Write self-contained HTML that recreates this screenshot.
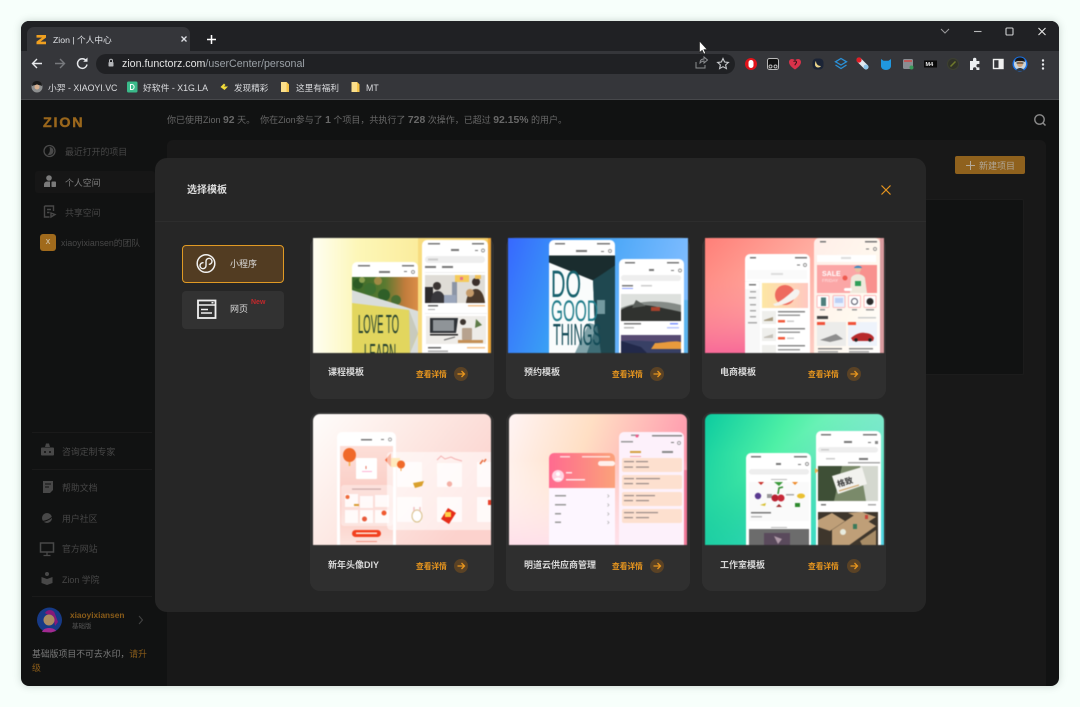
<!DOCTYPE html>
<html lang="zh"><head><meta charset="utf-8"><title>Zion | 个人中心</title>
<style>
*{box-sizing:border-box}
html{background:#f7fffb}
html,body{margin:0;padding:0;width:1080px;height:707px;overflow:hidden;font-family:"Liberation Sans","Noto Sans CJK SC",sans-serif}
body{filter:blur(.25px)}
.a{position:absolute;white-space:nowrap}
svg{position:absolute;display:block}
.side{font-size:8.900px;line-height:14px;color:#474747}
.card{position:absolute;width:184px;background:#2f2f2f;border-radius:10px}
.ct{position:absolute;left:18px;font-size:9px;font-weight:700;color:#d8d8d8;line-height:14px;white-space:nowrap}
.cl{position:absolute;left:106px;font-size:7.700px;font-weight:700;color:#e8961e;line-height:14px;white-space:nowrap}
.th{position:absolute;overflow:hidden;filter:blur(.4px)}
.th svg{position:static}
</style></head><body>

<div class="a" style="left:21px;top:21px;width:1038px;height:665px;border-radius:8px;background:#111212;box-shadow:0 0 8px rgba(60,80,70,.25)"></div>

<div class="a" style="left:21px;top:21px;width:1038px;height:79px;overflow:hidden;border-radius:8px 8px 0 0;background:#202124">
  <div class="a" style="left:0;top:30px;width:1038px;height:49px;background:#35363a"></div>
  <div class="a" style="left:0;top:78px;width:1038px;height:1px;background:#47484b"></div>
  <div class="a" style="left:6px;top:6px;width:163px;height:25px;background:#35363a;border-radius:7px 7px 0 0"></div>
  <div class="a" style="left:32px;top:12px;font-size:8.700px;line-height:14px;color:#dfe1e5">Zion | 个人中心</div>
  <div class="a" style="left:75px;top:33px;width:639px;height:20px;border-radius:10px;background:#202124"></div>
  <div class="a" style="left:101px;top:36px;font-size:10.650px;line-height:14px;color:#e3e3e3">zion.functorz.com<span style="color:#9aa0a6">/userCenter/personal</span></div>
</div>

<svg style="left:0;top:0" width="1080" height="110" viewBox="0 0 1080 110" fill="none">
  <path d="M36.500 35h9.500v2.600l-5.500 4h5.500v2.600H36.500v-2.600l5.500-4h-5.500z" fill="#f0a020"/>
  <path d="M181.500 36.500l5 5M186.500 36.500l-5 5" stroke="#dfe1e5" stroke-width="1.300"/>
  <path d="M207 39.500h9M211.500 35v9" stroke="#fff" stroke-width="1.500"/>
  <path d="M33 63.500h9M37 59l-4.500 4.500L37 68" stroke="#e8eaed" stroke-width="1.400"/>
  <path d="M55 63.500h9M60 59l4.500 4.500L60 68" stroke="#77797d" stroke-width="1.400"/>
  <path d="M86 60.500a4.800 4.800 0 1 0 1 4" stroke="#e8eaed" stroke-width="1.400"/><path d="M87.500 57.500v4.300h-4.300z" fill="#e8eaed"/>
  <rect x="108.500" y="62" width="5" height="4.500" rx=".8" fill="#b5b7ba"/><path d="M109.500 62v-1.200a1.500 1.500 0 0 1 3 0V62" stroke="#b5b7ba"/>
  <path d="M696 62v6h9v-3M700 63c0-3 2-4 4-4v-2l3.500 3-3.500 3v-2c-2 0-3 1-4 2z" stroke="#8c8e91" stroke-width="1"/>
  <path d="M723 58.500l1.600 3.500 3.800.4-2.800 2.500.8 3.700-3.400-1.900-3.400 1.900.8-3.700-2.800-2.500 3.800-.4z" stroke="#c8cacd" stroke-width="1.100"/>
  <circle cx="751" cy="64" r="6" fill="#e0131a"/><rect x="748.500" y="60" width="5" height="8" rx="2.500" fill="#fff"/>
  <rect x="767.500" y="58.500" width="11" height="11" rx="2" fill="#111" stroke="#b9b9b9"/><circle cx="770.500" cy="66.500" r="1.500" stroke="#bbb"/><circle cx="775.500" cy="66.500" r="1.500" stroke="#bbb"/>
  <path d="M795 69.500c-3-2-6-4.500-6-7.500 0-3.500 4.500-4 6-1.500 1.500-2.500 6-2 6 1.500 0 3-3 5.500-6 7.500z" fill="#d8324a"/><path d="M793.500 61.500c1.500-1 3-.5 3 .8s-1.500 1.300-1.500 3" stroke="#2a1214" stroke-width="1"/>
  <rect x="812.500" y="58.500" width="11" height="11" rx="4" fill="#1b2436"/><path d="M816 61c0 3 2 5 5 5-1.500 2.500-6 1.800-6-1.500 0-1.500.3-2.800 1-3.500z" fill="#ead48a"/>
  <path d="M841 58.500l5.500 3.300-5.500 3.200-5.500-3.200zM835.500 65l5.500 3.500 5.500-3.500" stroke="#2a91d8" stroke-width="1.300"/>
  <path d="M859 60l7 7" stroke="#dfe8ef" stroke-width="5" stroke-linecap="round"/><circle cx="859" cy="60" r="2.600" fill="#e01c24"/><circle cx="866" cy="67" r="2.400" fill="#8cc4e8"/>
  <path d="M881 59l2.500 1.800h5L891 59v7c0 2.500-2.500 4-5 4s-5-1.500-5-4z" fill="#2098e0"/>
  <rect x="903" y="59" width="10" height="10" rx="1.500" fill="#8a8d92"/><rect x="904" y="60" width="8" height="2" fill="#c05a5a"/><circle cx="911.500" cy="67.500" r="2" fill="#3a9a5a"/>
  <rect x="924" y="60.500" width="13" height="7" fill="#0a0a0a"/><text x="925.500" y="66" font-size="5.500" font-weight="700" font-family="Liberation Sans" fill="#eee">M4</text>
  <circle cx="953" cy="64" r="5.500" fill="#303228" stroke="#3d4030"/><path d="M950.500 66.500l5-5" stroke="#6f7a2a" stroke-width="1.500"/>
  <path d="M970 61h3v-1.500a1.700 1.700 0 0 1 3.400 0V61h3v3h-1.300a1.700 1.700 0 0 0 0 3.400h1.300v2.600h-3v-1a1.700 1.700 0 0 0-3.400 0v1h-3z" fill="#eceff1"/>
  <rect x="993.500" y="59.500" width="9.500" height="9" stroke="#f0f0f0" stroke-width="1.400"/><rect x="998.500" y="59.500" width="4.500" height="9" fill="#f0f0f0"/>
  <circle cx="1020" cy="64" r="7.500" fill="#1a73e8"/><circle cx="1020" cy="64" r="6" fill="#c9d4da"/><path d="M1015 62c0-3.500 2.500-4.500 5-4.500s5 1 5 4.500c-2-1.300-8-1.300-10 0z" fill="#151515"/><circle cx="1020" cy="64" r="3" fill="#d2a67c"/><path d="M1016.500 63h7" stroke="#222"/><path d="M1016 71c.5-2 2-3 4-3s3.500 1 4 3z" fill="#2e3a48"/>
  <circle cx="1043" cy="60.500" r="1.200" fill="#e8eaed"/><circle cx="1043" cy="64.500" r="1.200" fill="#e8eaed"/><circle cx="1043" cy="68.500" r="1.200" fill="#e8eaed"/>
  <path d="M941 29l4 4 4-4" stroke="#9a9b9d" stroke-width="1"/>
  <path d="M974 31.500h7.500" stroke="#b8b9ba" stroke-width="1.100"/>
  <rect x="1006" y="28" width="7" height="7" rx="1" stroke="#d0d1d2" stroke-width="1.100"/>
  <path d="M1038.500 28l7 7M1045.500 28l-7 7" stroke="#e8e8e8" stroke-width="1.100"/>
  <path d="M699.500 41v11.500l2.700-2.300 1.800 3.800 1.600-.8-1.700-3.600h3.300z" fill="#fff" stroke="#222" stroke-width=".6"/>
  <circle cx="37" cy="87" r="5.500" fill="#8d8f90"/><path d="M32 86c0-4 3-5 5-5s5 1 5 5c-3-1.500-7-1.500-10 0z" fill="#1a1a1a"/><circle cx="37" cy="87" r="2.500" fill="#d8b090"/>
  <rect x="127" y="81.500" width="10.500" height="11" rx="1.500" fill="#3aba8a"/><path d="M130.500 84.500v5h1.500c2.800 0 2.800-5 0-5z" stroke="#f4fff9"/>
  <path d="M220.500 87l3.500-3.500 1.500 1.500-1.500 1.500h4L224.500 90z" fill="#f2dc3a"/>
  <path d="M281 82h5.500l2.500 2.500V92h-8z" fill="#fbdf8a"/><path d="M286.500 82l2.500 2.500V92h-2.500z" fill="#f6c54a"/>
  <path d="M351.500 82h5.500l2.500 2.500V92h-8z" fill="#fbdf8a"/><path d="M357 82l2.500 2.500V92H357z" fill="#f6c54a"/>
</svg>
<div class="a" style="left:48px;top:81px;font-size:8.800px;line-height:14px;color:#dcdde0">小羿 - XIAOYI.VC</div>
<div class="a" style="left:143px;top:81px;font-size:8.800px;line-height:14px;color:#dcdde0">好软件 - X1G.LA</div>
<div class="a" style="left:234px;top:81px;font-size:8.600px;line-height:14px;color:#dcdde0">发现精彩</div>
<div class="a" style="left:296px;top:81px;font-size:8.600px;line-height:14px;color:#dcdde0">这里有福利</div>
<div class="a" style="left:366px;top:81px;font-size:8.800px;line-height:14px;color:#dcdde0">MT</div>

<!-- page behind -->
<div class="a" style="left:167px;top:140px;width:879px;height:546px;background:#181818;border-radius:6px 6px 0 0"></div>
<div class="a" style="left:900px;top:199px;width:124px;height:176px;background:#111212;border:1px solid #1c1c1c;border-radius:2px"></div>
<div class="a" style="left:955px;top:156px;width:70px;height:18px;background:#8f611d;border-radius:2px"></div>
<div class="a" style="left:979px;top:159px;font-size:9px;line-height:15px;color:#b0a696">新建项目</div>
<div class="a" style="left:167px;top:113px;font-size:9px;line-height:15px;color:#686868">你已使用Zion <b style="font-size:10.400px">92</b> 天。&nbsp; 你在Zion参与了 <b style="font-size:10.400px">1</b> 个项目，共执行了 <b style="font-size:10.400px">728</b> 次操作，已超过 <b style="font-size:10.400px">92.15%</b> 的用户。</div>
<div class="a" style="left:43px;top:115px;font-size:13.500px;line-height:16px;font-weight:700;letter-spacing:1.700px;color:#9a671c;-webkit-text-stroke:.4px #9a671c;transform:scaleX(1.06);transform-origin:left">ZION</div>

<div class="a side" style="left:65px;top:145px">最近打开的项目</div>
<div class="a" style="left:35px;top:171px;width:120px;height:22px;background:#161616;border-radius:3px"></div>
<div class="a side" style="left:65px;top:176px;color:#808080">个人空间</div>
<div class="a side" style="left:65px;top:206px">共享空间</div>
<div class="a" style="left:40px;top:234px;width:16px;height:17px;background:#a06a1c;border-radius:3px;color:#cbb898;font:700 7px/17px 'Liberation Sans',sans-serif;text-align:center">X</div>
<div class="a side" style="left:61px;top:236px;font-size:8.800px">xiaoyixiansen的团队</div>
<div class="a" style="left:32px;top:432px;width:120px;height:1px;background:#1a1a1a"></div>
<div class="a" style="left:32px;top:469px;width:120px;height:1px;background:#1a1a1a"></div>
<div class="a" style="left:32px;top:596px;width:120px;height:1px;background:#1a1a1a"></div>
<div class="a side" style="left:62px;top:445px">咨询定制专家</div>
<div class="a side" style="left:62px;top:481px">帮助文档</div>
<div class="a side" style="left:62px;top:512px">用户社区</div>
<div class="a side" style="left:62px;top:542px">官方网站</div>
<div class="a side" style="left:62px;top:573px">Zion 学院</div>
<div class="a" style="left:70px;top:608px;font-size:8.300px;line-height:14px;font-weight:700;color:#8a5c19">xiaoyixiansen</div>
<div class="a" style="left:72px;top:621px;font-size:6.500px;line-height:12px;color:#555">基础版</div>
<div class="a" style="left:32px;top:647px;font-size:8.850px;line-height:15px;color:#7a7a7a">基础版项目不可去水印，<span style="color:#8a5c19">请升</span></div>
<div class="a" style="left:32px;top:661px;font-size:8.850px;line-height:15px;color:#8a5c19">级</div>

<svg style="left:0;top:100px" width="1080" height="600" viewBox="0 100 1080 600" fill="none">
  <circle cx="49.500" cy="151" r="5.500" stroke="#4a4a4a" stroke-width="1.300"/><path d="M49.500 147a4 4 0 0 1 0 8c-1 0-2-.5-2-.5 2-1 3-4 2-7.500z" fill="#4a4a4a"/>
  <circle cx="49" cy="178" r="2.800" fill="#7a7a7a"/><path d="M44 187v-2.500a3 3 0 0 1 3-3h3v5.500z" fill="#7a7a7a"/><rect x="51.500" y="181.500" width="4.500" height="5.500" rx=".8" fill="#7a7a7a"/>
  <path d="M44.500 206h9v5M44.500 206v11h5M47 209.500h4M47 212.500h2.500M51 213l4 1.500-4 2.500z" stroke="#484848" stroke-width="1.400"/>
  <path d="M42 447.500h11a1 1 0 0 1 1 1v6a1 1 0 0 1-1 1H42a1 1 0 0 1-1-1v-6a1 1 0 0 1 1-1zM45 447l1-3.500h3l1 3.500" fill="#484848"/><circle cx="45" cy="452" r="1" fill="#111"/><circle cx="50" cy="452" r="1" fill="#111"/>
  <path d="M43 481h10v9l-3 3h-7z" fill="#484848"/><path d="M45 484h6M45 487h4" stroke="#111"/>
  <circle cx="47" cy="518" r="5" fill="#484848"/><path d="M41 521c3 1 9-1 12-5" stroke="#111" stroke-width="1"/>
  <rect x="40.500" y="543" width="13" height="9" stroke="#484848" stroke-width="1.500"/><path d="M47 552v3M43.500 555.500h7" stroke="#484848" stroke-width="1.300"/>
  <circle cx="47" cy="574" r="2" fill="#484848"/><path d="M41.500 577l5.500 2 5.500-2v6l-5.500 2-5.500-2z" fill="#484848"/>
  <circle cx="49.500" cy="620" r="12.500" fill="#173a86"/><path d="M45 613c2-4 9-4 10 1l3 8-3 4c-1-5-1-9-3-11-2 0-5 0-7-2z" fill="#86197a"/><circle cx="49" cy="620" r="5.500" fill="#ab8c62"/><path d="M42 632c1-3 4-4 7-4s6 1 7 3l-5 1.500z" fill="#a22a90"/>
  <path d="M139 616l3.500 4-3.500 4" stroke="#444" stroke-width="1"/>
  <circle cx="1039.500" cy="119.500" r="4.700" stroke="#8a8a8a" stroke-width="1.400"/><path d="M1043 123l2.500 2.500" stroke="#8a8a8a" stroke-width="1.500"/>
  <path d="M966 165.500h9M970.500 161v9" stroke="#b5aa98" stroke-width="1"/>
</svg>

<!-- modal -->
<div class="a" style="left:155px;top:158px;width:771px;height:454px;background:#262626;border-radius:12px"></div>
<div class="a" style="left:155px;top:221px;width:771px;height:1px;background:#2d2d2d"></div>
<div class="a" style="left:187px;top:183px;font-size:10px;line-height:15px;font-weight:700;color:#dcdcdc">选择模板</div>
<svg style="left:880px;top:184px" width="12" height="12" fill="none"><path d="M1.500 1.500l9 9M10.500 1.500l-9 9" stroke="#e8961e" stroke-width="1.200"/></svg>

<div class="a" style="left:182px;top:245px;width:102px;height:38px;background:#523c22;border:1.500px solid #e09a24;border-radius:4px"></div>
<div class="a" style="left:182px;top:291px;width:102px;height:38px;background:#323232;border-radius:4px"></div>
<div class="a" style="left:230px;top:257px;font-size:9px;line-height:15px;color:#dedede">小程序</div>
<div class="a" style="left:230px;top:302px;font-size:9px;line-height:15px;color:#dedede">网页</div>
<div class="a" style="left:251px;top:297px;font-size:7px;line-height:11px;font-weight:700;color:#c4282c">New</div>
<svg style="left:190px;top:250px" width="34" height="72" viewBox="190 250 34 72" fill="none">
  <circle cx="206" cy="263.500" r="8.800" stroke="#f2f2f2" stroke-width="1.500"/>
  <path d="M203.500 262.700A3 3 0 1 0 206 265.500V261.500A3 3 0 1 1 208.800 264.300" stroke="#f2f2f2" stroke-width="1.400"/>
  <rect x="198" y="300.500" width="17.500" height="17.500" stroke="#f0f0f0" stroke-width="1.800"/>
  <path d="M198 305h17.500" stroke="#f0f0f0" stroke-width="1.600"/><path d="M201 309.500h7M201 313h11" stroke="#f0f0f0" stroke-width="1.400"/><rect x="211.500" y="302" width="2" height="1.500" fill="#f0f0f0"/>
</svg>

<!-- cards -->
<div class="card" style="left:310px;top:237px;height:162px"><div class="ct" style="top:128px">课程模板</div><div class="cl" style="top:131px">查看详情</div></div>
<div class="card" style="left:506px;top:237px;height:162px"><div class="ct" style="top:128px">预约模板</div><div class="cl" style="top:131px">查看详情</div></div>
<div class="card" style="left:702px;top:237px;height:162px"><div class="ct" style="top:128px">电商模板</div><div class="cl" style="top:131px">查看详情</div></div>
<div class="card" style="left:310px;top:412px;height:179px"><div class="ct" style="top:146px">新年头像DIY</div><div class="cl" style="top:148px">查看详情</div></div>
<div class="card" style="left:506px;top:412px;height:179px"><div class="ct" style="top:146px">明道云供应商管理</div><div class="cl" style="top:148px">查看详情</div></div>
<div class="card" style="left:702px;top:412px;height:179px"><div class="ct" style="top:146px">工作室模板</div><div class="cl" style="top:148px">查看详情</div></div>

<svg style="left:300px;top:360px" width="600" height="220" viewBox="300 360 600 220" fill="none">
  <circle cx="461" cy="374" r="7" fill="#5a4225"/><path d="M457.500 374h7M461.500 371l3 3-3 3" stroke="#e8961e" stroke-width="1.300"/>
  <circle cx="657" cy="374" r="7" fill="#5a4225"/><path d="M653.500 374h7M657.500 371l3 3-3 3" stroke="#e8961e" stroke-width="1.300"/>
  <circle cx="854" cy="374" r="7" fill="#5a4225"/><path d="M850.500 374h7M854.500 371l3 3-3 3" stroke="#e8961e" stroke-width="1.300"/>
  <circle cx="461" cy="566" r="7" fill="#5a4225"/><path d="M457.500 566h7M461.500 563l3 3-3 3" stroke="#e8961e" stroke-width="1.300"/>
  <circle cx="657" cy="566" r="7" fill="#5a4225"/><path d="M653.500 566h7M657.500 563l3 3-3 3" stroke="#e8961e" stroke-width="1.300"/>
  <circle cx="854" cy="566" r="7" fill="#5a4225"/><path d="M850.500 566h7M854.500 563l3 3-3 3" stroke="#e8961e" stroke-width="1.300"/>
</svg>

<!-- thumb 1 -->
<div class="th" style="left:313px;top:238px;width:178px;height:115px">
<svg width="178" height="115" viewBox="313 238 178 115" fill="none">
  <defs><linearGradient id="g1"><stop offset="0" stop-color="#fffef2"/><stop offset=".25" stop-color="#fdf7b8"/><stop offset=".65" stop-color="#fbeb98"/><stop offset="1" stop-color="#f4c65a"/></linearGradient>
  <linearGradient id="g1b" x2="1" y2="0"><stop offset="0" stop-color="#3a6a2a"/><stop offset=".5" stop-color="#5a7a30"/><stop offset=".8" stop-color="#c07c3c"/><stop offset="1" stop-color="#dc8e48"/></linearGradient></defs>
  <rect x="313" y="238" width="178" height="115" fill="url(#g1)"/><rect x="418" y="238" width="73" height="115" fill="#f6d26a" opacity=".6"/><rect x="488" y="238" width="3" height="115" fill="#eda638"/>
  <rect x="352" y="262" width="66" height="100" rx="5" fill="#fff"/>
  <rect x="358" y="265" width="12" height="1.500" fill="#777"/><rect x="402" y="265" width="12" height="1.500" fill="#777"/><rect x="379" y="271" width="11" height="2" fill="#777"/><rect x="404" y="271" width="3" height="1" fill="#777"/><circle cx="413" cy="272" r="1.500" stroke="#777" stroke-width=".7"/>
  <rect x="352" y="277" width="66" height="35" fill="url(#g1b)"/>
  <circle cx="358" cy="284" r="5" fill="#2c5a24"/><circle cx="370" cy="289" r="6" fill="#3e7030"/><circle cx="384" cy="295" r="6" fill="#2f5f28"/><circle cx="396" cy="300" r="5" fill="#486e32"/><circle cx="362" cy="280" r="3" fill="#8aa050"/><circle cx="378" cy="281" r="4" fill="#a08a44"/>
  <path d="M352 290l66 21v42h-66z" fill="#d9dddb"/>
  <path d="M352 303l57 7 9 24-8 19h-58z" fill="#e2d65e"/><path d="M409 310l9 23-8 20z" fill="#c8cabd"/>
  <text x="358" y="333" font-size="26" textLength="41" lengthAdjust="spacingAndGlyphs" font-family="Liberation Sans" fill="#1f3d2e">LOVE TO</text>
  <text x="364" y="362" font-size="26" textLength="32" lengthAdjust="spacingAndGlyphs" font-family="Liberation Sans" fill="#1f3d2e">LEARN</text>
  <rect x="422" y="240" width="66" height="120" rx="5" fill="#fff"/>
  <rect x="428" y="243" width="12" height="1.500" fill="#777"/><rect x="472" y="243" width="12" height="1.500" fill="#777"/><rect x="451" y="249" width="8" height="2" fill="#777"/><rect x="475" y="250" width="3" height="1" fill="#777"/><circle cx="483" cy="250.500" r="1.500" stroke="#777" stroke-width=".7"/>
  <rect x="425" y="256" width="60" height="7" rx="3.500" fill="#eee"/><rect x="428" y="258.500" width="10" height="2" fill="#ccc"/>
  <rect x="425" y="266" width="11" height="2" fill="#777"/><rect x="442" y="266" width="11" height="2" fill="#777"/>
  <rect x="425" y="272" width="60" height="1" fill="#eee"/>
  <rect x="425" y="275" width="60" height="28" fill="#dfdcd6"/><rect x="425" y="287" width="8" height="16" fill="#2c2a2c"/><circle cx="437" cy="286" r="4" fill="#3b3432"/><path d="M431 303c0-9 3-12 7-12s7 4 8 12z" fill="#39383c"/><circle cx="476" cy="282" r="4" fill="#3a2e2a"/><path d="M466 303c1-9 5-14 10-14s8 6 9 14z" fill="#4b3a2c"/><circle cx="470" cy="293" r="4" fill="#c49a6a"/><rect x="455" y="275" width="14" height="7" fill="#f5cb5a"/><rect x="460" y="277" width="3" height="3" fill="#e8708a"/><rect x="475" y="275" width="6" height="4" fill="#eec05a"/><path d="M452 282v21h5v-21z" fill="#8c95a5"/><rect x="444" y="295" width="12" height="8" fill="#9aa5ba"/>
  <rect x="428" y="305" width="10" height="1.500" fill="#666"/><rect x="428" y="309" width="7" height="1" fill="#aaa"/><rect x="468" y="305" width="17" height="1.500" fill="#f4c08a"/>
  <rect x="425" y="313" width="62" height="1" fill="#f0f0f0"/>
  <rect x="426" y="316" width="60" height="28" fill="#eeece8"/><path d="M430 318h28l-2 15h-26z" fill="#2e3236"/><rect x="433" y="320" width="21" height="11" fill="#8f9498"/><rect x="430" y="334" width="28" height="1.500" fill="#222"/><rect x="462" y="328" width="10" height="12" rx="1" fill="#b7a28e"/><circle cx="463" cy="322" r="3" fill="#3d3530"/><path d="M476 319l6 6-7 3z" fill="#5e7b48"/><rect x="458" y="340" width="25" height="3" fill="#c48f55"/><path d="M444 340l11-3" stroke="#666"/>
  <rect x="428" y="347" width="13" height="1.500" fill="#666"/><rect x="467" y="347" width="18" height="1.500" fill="#f4c08a"/><rect x="428" y="350.500" width="20" height="1.500" fill="#aaa"/>
</svg></div>

<!-- thumb 2 -->
<div class="th" style="left:508px;top:238px;width:180px;height:115px">
<svg width="180" height="115" viewBox="508 238 180 115" fill="none">
  <defs><linearGradient id="g2" x2="1" y2=".2"><stop offset="0" stop-color="#3768ff"/><stop offset=".4" stop-color="#3aa0f5"/><stop offset="1" stop-color="#7ebcff"/></linearGradient>
  <linearGradient id="g2b" x2=".8" y2="1"><stop offset="0" stop-color="#0f2a2e"/><stop offset=".45" stop-color="#1f5a66"/><stop offset="1" stop-color="#16383e"/></linearGradient></defs>
  <rect x="508" y="238" width="180" height="115" fill="url(#g2)"/><rect x="684" y="300" width="4" height="53" fill="#5bb4ee"/>
  <rect x="549" y="240" width="66" height="120" rx="5" fill="#fff"/>
  <rect x="555" y="243" width="10" height="1.500" fill="#777"/><rect x="597" y="243" width="13" height="1.500" fill="#777"/><rect x="576" y="250" width="11" height="2" fill="#777"/><rect x="601" y="251" width="3" height="1" fill="#777"/><circle cx="610" cy="251" r="1.500" stroke="#777" stroke-width=".7"/>
  <rect x="549" y="255.500" width="66" height="98" fill="url(#g2b)"/>
  <path d="M549 262l44 18 2 50-8 23h-38z" fill="#fafcfc"/><path d="M549 255.500h66v10l-22 15-44-18z" fill="#1a2c2e"/><path d="M593 280l22-14v87h-28l8-23z" fill="#1f4850"/>
  <path d="M575 353l14-30 8 2 4 28z" fill="#4c7d86" opacity=".7"/><rect x="597" y="300" width="8" height="14" fill="#b8dde0" opacity=".55"/>
  <text x="551" y="297" font-size="38" textLength="30" lengthAdjust="spacingAndGlyphs" font-family="Liberation Sans" fill="#16606c">DO</text>
  <text x="551" y="321" font-size="30" textLength="47" lengthAdjust="spacingAndGlyphs" font-family="Liberation Sans" fill="#1f7c8a">GOOD</text>
  <text x="553" y="345" font-size="31" textLength="48" lengthAdjust="spacingAndGlyphs" font-family="Liberation Sans" fill="#124a56">THINGS</text>
  <rect x="619" y="259" width="65" height="100" rx="5" fill="#fff"/>
  <rect x="625" y="262" width="10" height="1.500" fill="#777"/><rect x="667" y="262" width="12" height="1.500" fill="#777"/><rect x="649" y="269" width="5" height="2" fill="#777"/><rect x="671" y="270" width="3" height="1" fill="#777"/><circle cx="680" cy="270.500" r="1.500" stroke="#777" stroke-width=".7"/>
  <rect x="621" y="275" width="60" height="6" rx="3" fill="#eee"/>
  <rect x="622" y="285" width="11" height="1.500" fill="#777"/><rect x="622" y="288" width="11" height=".8" fill="#6e88ff"/><rect x="641" y="285" width="11" height="1.500" fill="#ccc"/>
  <rect x="621" y="294" width="60" height="27" rx="2" fill="#858b87"/><path d="M621 294h60v11c-20-5-40-5-60 3z" fill="#dde0dd"/><path d="M621 310c14-8 24-6 60 2v9h-60z" fill="#30322f"/><rect x="651" y="307" width="9" height="4" fill="#a8412c"/><path d="M636 300l10 6-14 2z" fill="#5a5f5b"/>
  <rect x="624" y="323" width="17" height="1.500" fill="#777"/><rect x="624" y="327" width="10" height="1.500" fill="#bbb"/><rect x="670" y="323" width="8" height="1.500" fill="#7c94ff"/><rect x="667" y="327" width="12" height="1.500" fill="#b9c6ff"/>
  <rect x="621" y="335" width="60" height="18" fill="#384065"/><path d="M621 335h60v6c-20 3-40-2-60 0z" fill="#564a72"/><path d="M655 343c8 0 20-3 26-1v7h-30z" fill="#e89a3c"/><path d="M621 341l20 6 6 6h-26z" fill="#22294a"/>
</svg></div>

<!-- thumb 3 -->
<div class="th" style="left:705px;top:238px;width:179px;height:115px">
<svg width="179" height="115" viewBox="705 238 179 115" fill="none">
  <defs><linearGradient id="g3" x2="1" y2=".6"><stop offset="0" stop-color="#ff7f78"/><stop offset=".45" stop-color="#ffaa9e"/><stop offset="1" stop-color="#fdd6cd"/></linearGradient>
  <linearGradient id="g3p" x1="0" y1="0" x2="0" y2="1"><stop offset=".3" stop-color="#ff8a90" stop-opacity="0"/><stop offset="1" stop-color="#f86a98"/></linearGradient>
  <linearGradient id="g3c" x2="1" y2="1"><stop offset="0" stop-color="#ffeee8"/><stop offset=".6" stop-color="#fff9ef"/><stop offset="1" stop-color="#fff"/></linearGradient>
  <linearGradient id="g3s" x2="1"><stop offset="0" stop-color="#fde7a4"/><stop offset="1" stop-color="#ffc8c0"/></linearGradient></defs>
  <rect x="705" y="238" width="179" height="115" fill="url(#g3)"/><rect x="705" y="238" width="45" height="115" fill="url(#g3p)"/><rect x="880" y="238" width="4" height="115" fill="#d99a9e"/>
  <rect x="745" y="254" width="65" height="106" rx="5" fill="#fff"/>
  <rect x="750" y="257" width="6" height="1.500" fill="#777"/><rect x="795" y="257" width="12" height="1.500" fill="#777"/><rect x="797" y="264.500" width="3" height="1" fill="#777"/><circle cx="805" cy="265" r="1.500" stroke="#777" stroke-width=".7"/>
  <rect x="747" y="270" width="60" height="9" fill="#fafafa"/><rect x="771" y="273" width="12" height="2" fill="#ddd"/>
  <rect x="745" y="281" width="15" height="72" fill="#f8f8f8"/><rect x="745" y="282" width="14" height="7" fill="#fff"/>
  <rect x="749" y="284" width="7" height="1.500" fill="#777"/><rect x="750" y="291" width="6" height="1.500" fill="#aaa"/><rect x="749" y="297" width="7" height="1.500" fill="#aaa"/><rect x="750" y="304" width="6" height="1.500" fill="#aaa"/><rect x="750" y="310" width="6" height="1.500" fill="#aaa"/><rect x="750" y="316" width="6" height="1.500" fill="#aaa"/><rect x="748" y="322" width="9" height="1.500" fill="#aaa"/>
  <rect x="762" y="283" width="46" height="25" fill="url(#g3s)"/><circle cx="785" cy="295" r="10" fill="#ee6a5e"/><path d="M773 304c8-2 14-8 21-14 3-2 7 0 5 4-3 6-14 11-24 12z" fill="#f5f3f0"/>
  <rect x="762" y="311" width="14" height="13" fill="#efefec"/><path d="M764 320l9-3v4h-9z" fill="#a89c82"/><rect x="778" y="311" width="27" height="1.500" fill="#888"/><rect x="778" y="314.500" width="22" height="1.500" fill="#999"/><rect x="778" y="320" width="7" height="2.500" fill="#f25a3c"/><rect x="787" y="320.500" width="7" height="1.500" fill="#ccc"/>
  <rect x="762" y="328" width="14" height="13" fill="#efefec"/><path d="M764 337l9-3v4h-9z" fill="#c4c0b8"/><rect x="778" y="328" width="27" height="1.500" fill="#888"/><rect x="778" y="331.500" width="22" height="1.500" fill="#999"/><rect x="778" y="337" width="7" height="2.500" fill="#f25a3c"/><rect x="787" y="337.500" width="7" height="1.500" fill="#ccc"/>
  <rect x="762" y="345" width="14" height="8" fill="#efefec"/><rect x="778" y="345" width="27" height="1.500" fill="#888"/><rect x="778" y="349" width="22" height="1.500" fill="#999"/>
  <rect x="814" y="238" width="66" height="122" rx="5" fill="url(#g3c)"/>
  <rect x="820" y="241" width="6" height="1.500" fill="#777"/><rect x="865" y="241" width="12" height="1.500" fill="#777"/><rect x="866" y="248.500" width="3" height="1" fill="#777"/><circle cx="875" cy="249" r="1.500" stroke="#777" stroke-width=".7"/>
  <rect x="817" y="255" width="59" height="7" fill="#fff"/><rect x="841" y="257" width="10" height="2" fill="#ddd"/>
  <rect x="817" y="265" width="60" height="28" fill="#fba6a6"/><path d="M860 265h17v28h-17z" fill="#f8918e"/><circle cx="845" cy="278" r="2.500" fill="#ee5a50"/>
  <path d="M851 278c2-5 12-5 14 0l2 15h-17z" fill="#efe9dc"/><circle cx="858" cy="269" r="3.200" fill="#e9bea0"/><path d="M854 268c1-3 7-3 8 0z" fill="#3b88c0"/><rect x="855" y="281" width="6" height="5" fill="#2e9e58"/>
  <text x="822" y="276" font-size="7" font-weight="700" font-family="Liberation Sans" fill="#fff">SALE</text><text x="822" y="282" font-size="4.500" font-family="Liberation Sans" fill="#ffe8e8">FRIDAY</text>
  <rect x="844" y="288" width="8" height="3" rx="1.500" fill="#fff"/>
  <rect x="817" y="295.500" width="12" height="12" rx="1" fill="#fff" stroke="#fbb"/><rect x="821" y="297.500" width="5" height="8.500" fill="#4e7e7c"/>
  <rect x="833" y="295.500" width="12" height="12" rx="1" fill="#e9f1ff" stroke="#fbb"/><rect x="835" y="298" width="8" height="5" fill="#bcd0f5"/>
  <rect x="848.500" y="295.500" width="12" height="12" rx="1" fill="#fff" stroke="#fbb"/><circle cx="854.500" cy="301.500" r="3" stroke="#556" stroke-width="1"/>
  <rect x="864" y="295.500" width="12" height="12" rx="1" fill="#fff" stroke="#fbb"/><circle cx="870" cy="301.500" r="3.500" fill="#2c2c2c"/>
  <rect x="820" y="309" width="5" height="1.500" fill="#999"/><rect x="837" y="309" width="5" height="1.500" fill="#999"/><rect x="852" y="309" width="5" height="1.500" fill="#999"/><rect x="866" y="309" width="8" height="1.500" fill="#999"/>
  <rect x="817" y="316" width="11" height="3" fill="#444"/><rect x="858" y="317" width="18" height="1.500" fill="#ccc"/>
  <rect x="817" y="322" width="29" height="24" fill="#ececea"/><rect x="817" y="322" width="8" height="3" fill="#f0523a"/><path d="M820 340l16-6 7 5-13 3z" fill="#8e8e8e"/>
  <rect x="848" y="322" width="29" height="24" fill="#eef3fb"/><rect x="848" y="322" width="8" height="3" fill="#f0523a"/><path d="M851 338c4-3 8-6 14-5 4 0 8 2 9 5l-1 3h-20z" fill="#b72a2c"/><circle cx="856" cy="340" r="1.700" fill="#222"/><circle cx="870" cy="340" r="1.700" fill="#222"/>
  <rect x="818" y="348" width="24" height="1.500" fill="#888"/><rect x="849" y="348" width="24" height="1.500" fill="#888"/><rect x="818" y="351" width="20" height="1.500" fill="#aaa"/><rect x="849" y="351" width="20" height="1.500" fill="#aaa"/>
</svg></div>

<!-- thumb 4 -->
<div class="th" style="left:313px;top:414px;width:178px;height:131px;border-radius:7px 7px 0 0">
<svg width="178" height="131" viewBox="313 414 178 131" fill="none">
  <defs><linearGradient id="g4" x2="1" y2=".6"><stop offset="0" stop-color="#fffdfb"/><stop offset=".5" stop-color="#fde8e3"/><stop offset="1" stop-color="#fcd2cd"/></linearGradient>
  <linearGradient id="g4p" x2="0" y2="1"><stop offset="0" stop-color="#fddfd8"/><stop offset=".6" stop-color="#fac8c0"/><stop offset="1" stop-color="#fde4de"/></linearGradient></defs>
  <rect x="313" y="414" width="178" height="131" fill="url(#g4)"/>
  <rect x="337" y="432" width="59" height="120" rx="5" fill="#fff"/><rect x="340" y="446" width="53" height="99" fill="url(#g4p)"/>
  <rect x="361" y="439" width="11" height="1.500" fill="#777"/><rect x="381" y="439" width="3" height="1" fill="#777"/><circle cx="390" cy="439.500" r="1.500" stroke="#888" stroke-width=".7"/>
  <rect x="356" y="458" width="21" height="21" rx="1" fill="#fff"/><rect x="362" y="471" width="10" height="1" fill="#f6a" opacity=".5"/><path d="M366 466v3" stroke="#e8705a"/>
  <ellipse cx="349.500" cy="455" rx="6.500" ry="7" fill="#f0692a"/><path d="M349.500 462v4" stroke="#f5b24a" stroke-width="1.500"/>
  <rect x="391" y="458" width="9" height="9" fill="#ffd070"/><path d="M391 453l-6 7 6 7z" fill="#f4663a"/>
  <rect x="341" y="485" width="52" height="41" rx="3" fill="#fff" opacity=".38"/>
  <rect x="345" y="494" width="13" height="13" fill="#fff" opacity=".85"/><rect x="360" y="496" width="13" height="12" fill="#fff" opacity=".85"/><rect x="375" y="495" width="14" height="12" fill="#fff" opacity=".85"/>
  <rect x="345" y="510" width="13" height="13" fill="#fff" opacity=".85"/><rect x="360" y="510" width="13" height="13" fill="#fff" opacity=".85"/><rect x="375" y="510" width="14" height="13" fill="#fff" opacity=".85"/>
  <circle cx="347.500" cy="497" r="2" fill="#ef6a3a"/><circle cx="384" cy="513" r="2.500" fill="#f05a30"/><circle cx="364.500" cy="519" r="2.500" fill="#e85a3a"/><rect x="354" y="504" width="5" height="2" fill="#d99a30"/>
  <rect x="352" y="488.500" width="29" height="1.200" fill="#caa"/>
  <rect x="352" y="530" width="29" height="7" rx="3.500" fill="#f2401f"/><rect x="356" y="532.500" width="21" height="1.500" fill="#ffe8d8"/><rect x="356" y="541" width="21" height="1" fill="#f09080"/>
  <rect x="387" y="452" width="108" height="78" rx="4" fill="#fff" opacity=".55"/>
  <rect x="397" y="462" width="25" height="25" rx="1" fill="#fff" opacity=".75"/><rect x="437" y="463" width="25" height="24" rx="1" fill="#fff" opacity=".75"/><rect x="477" y="462" width="25" height="25" rx="1" fill="#fff" opacity=".75"/>
  <rect x="397" y="497" width="25" height="25" rx="1" fill="#fff" opacity=".75"/><rect x="437" y="497" width="25" height="25" rx="1" fill="#fff" opacity=".75"/><rect x="477" y="497" width="25" height="25" rx="1" fill="#fff" opacity=".75"/>
  <circle cx="401" cy="464.500" r="4" fill="#f06a2a"/><path d="M401 468v3" stroke="#f5a040"/>
  <path d="M413 483l11-2-2 5-7 2z" fill="#d9a02c"/>
  <path d="M437 460l4-4 4 3 6-2 4 2 7 2" stroke="#f4b0b0"/><circle cx="449.500" cy="484" r="2.700" fill="#f4b0a6"/>
  <path d="M480 464l3-4M486 459l-2 3" stroke="#e86a3a" stroke-width="1.500"/>
  <path d="M448 508l-7 11 8 5 7-11z" fill="#e62c18"/><rect x="445" y="512" width="6" height="5" fill="#ffd048"/>
  <ellipse cx="417" cy="516" rx="5" ry="6" fill="#fff" stroke="#d8c08a"/><path d="M414 511v-4M420 511v-4" stroke="#f0c0c0" stroke-width="1.500"/>
  <rect x="488" y="500" width="3" height="5" fill="#e8402a"/>
</svg></div>

<!-- thumb 5 -->
<div class="th" style="left:509px;top:414px;width:178px;height:131px;border-radius:7px 7px 0 0">
<svg width="178" height="131" viewBox="509 414 178 131" fill="none">
  <defs><linearGradient id="g5" x2="1" y2=".25"><stop offset="0" stop-color="#fff4f4"/><stop offset=".45" stop-color="#ffdfc4"/><stop offset="1" stop-color="#ff9aae"/></linearGradient>
  <linearGradient id="g5b" x2="0" y2="1"><stop offset="0" stop-color="#fff" stop-opacity="0"/><stop offset="1" stop-color="#ffe0ea"/></linearGradient>
  <linearGradient id="g5h" x2="1" y2="0"><stop offset="0" stop-color="#ff6a90"/><stop offset="1" stop-color="#fba27a"/></linearGradient></defs>
  <rect x="509" y="414" width="178" height="131" fill="url(#g5)"/><rect x="509" y="460" width="178" height="85" fill="url(#g5b)"/><rect x="684" y="470" width="3" height="75" fill="#f07898"/>
  <rect x="549" y="453" width="66" height="100" rx="5" fill="#fdf6ff"/>
  <path d="M549 488v-30a5 5 0 0 1 5-5h56a5 5 0 0 1 5 5v30z" fill="url(#g5h)"/>
  <rect x="560" y="456" width="10" height="1.500" fill="#fff" opacity=".7"/><rect x="582" y="456" width="28" height="1.500" fill="#fff" opacity=".7"/><rect x="598" y="461" width="17" height="5" rx="2.500" fill="#fff" opacity=".85"/>
  <circle cx="558" cy="476" r="6" fill="#ffd6e4"/><circle cx="558" cy="474" r="2" fill="#fff"/><path d="M554 480c1-3 7-3 8 0z" fill="#fff"/>
  <rect x="566" y="472" width="6" height="1.500" fill="#ffe8ec"/><rect x="566" y="479" width="19" height="1.500" fill="#ffe8ec"/>
  <rect x="555" y="495" width="11" height="1.500" fill="#999"/><rect x="555" y="504" width="11" height="1.500" fill="#999"/><rect x="555" y="513" width="6" height="1.500" fill="#999"/><rect x="555" y="521.500" width="6" height="1.500" fill="#999"/>
  <path d="M607.500 494.500l1.500 1.500-1.500 1.500M607.500 503.500l1.500 1.500-1.500 1.500M607.500 512.500l1.500 1.500-1.500 1.500M607.500 521l1.500 1.500-1.500 1.500" stroke="#aaa" stroke-width=".7"/>
  <rect x="619" y="432" width="65" height="120" rx="5" fill="#fdf1fb"/>
  <rect x="631" y="434.500" width="8" height="1.500" fill="#999"/><circle cx="637" cy="436" r="1.500" fill="#f05a8a"/><rect x="652" y="435" width="30" height="1.500" fill="#888"/>
  <rect x="621" y="441" width="12" height="1.500" fill="#999"/><rect x="671" y="442" width="3" height="1" fill="#777"/><circle cx="679" cy="443" r="1.500" stroke="#888" stroke-width=".7"/>
  <rect x="630" y="451" width="11" height="2" fill="#d4a040"/><rect x="630" y="456" width="11" height="1" fill="#f8a0a8"/><rect x="662" y="451" width="11" height="2" fill="#888"/>
  <rect x="622" y="458" width="60" height="14" rx="2" fill="#fde0cf"/><rect x="622" y="475" width="60" height="14" rx="2" fill="#fde0cf"/><rect x="622" y="492" width="60" height="14" rx="2" fill="#fde0cf"/><rect x="622" y="509" width="60" height="14" rx="2" fill="#fde0cf"/>
  <g fill="#9a8a86"><rect x="624" y="461" width="10" height="1.200"/><rect x="636" y="461" width="12" height="1.200"/><rect x="624" y="466.500" width="9" height="1.200"/><rect x="636" y="466.500" width="13" height="1.200"/>
  <rect x="624" y="478" width="10" height="1.200"/><rect x="636" y="478" width="24" height="1.200"/><rect x="624" y="483" width="9" height="1.200"/><rect x="636" y="483" width="13" height="1.200"/>
  <rect x="624" y="495" width="10" height="1.200"/><rect x="636" y="495" width="19" height="1.200"/><rect x="624" y="500" width="9" height="1.200"/><rect x="636" y="500" width="13" height="1.200"/>
  <rect x="624" y="512" width="10" height="1.200"/><rect x="636" y="512" width="22" height="1.200"/><rect x="624" y="517" width="9" height="1.200"/><rect x="636" y="517" width="13" height="1.200"/></g>
</svg></div>

<!-- thumb 6 -->
<div class="th" style="left:705px;top:414px;width:179px;height:131px;border-radius:7px 7px 0 0">
<svg width="179" height="131" viewBox="705 414 179 131" fill="none">
  <defs><linearGradient id="g6" x2="1" y2=".4"><stop offset="0" stop-color="#0ccba0"/><stop offset=".42" stop-color="#4ef0a6"/><stop offset="1" stop-color="#b6f5e4"/></linearGradient>
  <linearGradient id="g6b" x1="0" y1="0" x2="1" y2="1"><stop offset=".35" stop-color="#0bc09a" stop-opacity="0"/><stop offset=".7" stop-color="#38e0c0" stop-opacity=".6"/><stop offset="1" stop-color="#54d4e8"/></linearGradient>
  <linearGradient id="g6l" x1="0" y1="0" x2="0" y2="1"><stop offset=".3" stop-color="#0cc4a0" stop-opacity="0"/><stop offset="1" stop-color="#0cc4a0" stop-opacity=".7"/></linearGradient></defs>
  <rect x="705" y="414" width="179" height="131" fill="url(#g6)"/><rect x="705" y="414" width="179" height="131" fill="url(#g6l)"/><rect x="705" y="414" width="179" height="131" fill="url(#g6b)"/>
  <rect x="746" y="453" width="65" height="100" rx="5" fill="#fff"/>
  <rect x="751" y="456" width="10" height="1.500" fill="#777"/><rect x="794" y="456" width="13" height="1.500" fill="#777"/><rect x="776" y="463" width="5" height="2" fill="#777"/><rect x="798" y="464" width="3" height="1" fill="#777"/><circle cx="807" cy="464" r="1.500" stroke="#777" stroke-width=".7"/>
  <rect x="749" y="469" width="60" height="5.500" rx="2.700" fill="#eee"/>
  <rect x="771" y="479" width="16" height="1" fill="#bbb"/><rect x="749" y="482" width="60" height="39" rx="1" fill="#fafafa"/>
  <path d="M758 482h6l-3 3z" fill="#c8302a"/><path d="M774 482h9l-4 4z" fill="#3a9a3a"/><path d="M792 482h6l-3 3z" fill="#ee8a2a"/>
  <circle cx="758" cy="496" r="3.200" fill="#5a3a90"/><rect x="767" y="494" width="5" height="4" fill="#999"/><circle cx="775" cy="498" r="3.500" fill="#b82030"/><circle cx="781" cy="498" r="3.500" fill="#c82838"/><path d="M778 494l1-6 4-1" stroke="#2e8a2e" stroke-width="1.500"/><rect x="786" y="494" width="8" height="1.500" fill="#aaa"/><ellipse cx="801" cy="496" rx="4" ry="2.500" fill="#eac030"/>
  <path d="M760 505l6-2-1 3z" fill="#d8c030"/><path d="M776 507h6l-3-3z" fill="#a03030"/><path d="M795 503h5v4h-5z" fill="#2e8a2e"/>
  <rect x="751" y="512" width="20" height="1.500" fill="#777"/><rect x="751" y="516" width="11" height="1.500" fill="#bbb"/>
  <rect x="771" y="527" width="16" height="1" fill="#bbb"/>
  <rect x="749" y="529" width="60" height="20" fill="#6c6c6c"/><rect x="764" y="533" width="26" height="12" fill="#5a4a5c"/><path d="M774 536l8 3-4 5z" fill="#b09aa8"/>
  <rect x="816" y="431" width="65" height="120" rx="5" fill="#fff"/>
  <rect x="821" y="434" width="10" height="1.500" fill="#777"/><rect x="863" y="434" width="14" height="1.500" fill="#777"/><rect x="844" y="441" width="8" height="2" fill="#777"/><rect x="868" y="442" width="3" height="1" fill="#777"/><rect x="875" y="441" width="3" height="3" fill="#888"/>
  <rect x="818" y="447" width="60" height="5.500" rx="2.700" fill="#eee"/><rect x="821" y="449" width="8" height="1.500" fill="#ccc"/>
  <rect x="826" y="458" width="9" height="1.500" fill="#ccc"/><rect x="859" y="458" width="9" height="2" fill="#777"/><rect x="848" y="462" width="32" height="1.500" fill="#aaa"/>
  <path d="M815 468l4 2.500-4 3z" fill="#f0b050"/>
  <rect x="818" y="466" width="60" height="35" fill="#7a8a6a"/><path d="M818 466h24l-8 35h-16z" fill="#3e4f36"/><path d="M860 466h18v35h-12z" fill="#d4d8cf"/><path d="M832 476l30-9 5 17-29 10z" fill="#f2f2ee"/>
  <text x="838" y="487" font-size="8" font-weight="700" fill="#333" font-family="Liberation Sans,Noto Sans CJK SC" transform="rotate(-16 838 487)">格致</text>
  <path d="M839 491l20-6" stroke="#c89a5a"/>
  <rect x="821" y="504" width="5" height="1.500" fill="#777"/><rect x="868" y="504" width="8" height="1.500" fill="#aaa"/>
  <rect x="818" y="512" width="60" height="34" fill="#3e362c"/><path d="M818 520l14-7 13 8-15 10-12-4zM832 530l24-16 20 12-28 20h-16zM848 513l14-1 14 5-8 5z" fill="#bf9f78"/><path d="M860 541l16-11v15h-14z" fill="#a88c66"/><circle cx="843" cy="532" r="3" fill="#e8ece0"/><rect x="853" y="524" width="4" height="5" fill="#3a7a5a"/><rect x="865" y="515" width="3" height="4" fill="#c8443a"/>
</svg></div>

</body></html>
